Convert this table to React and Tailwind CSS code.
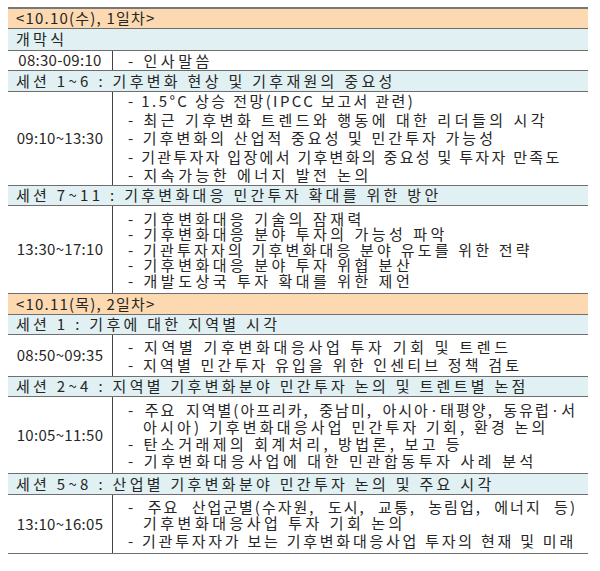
const day1 = [
  { kind: "day", text: "<10.10(수), 1일차>", h: "h-[20px]" },
  { kind: "sec", text: "개막식", h: "h-[22px]" },
  { kind: "item", time: "08:30-09:10", h: "h-[20px]", lh: "leading-[18px]", lines: [{ t: "- 인사말씀" }] },
  { kind: "sec", text: "세션 1~6 : 기후변화 현상 및 기후재원의 중요성", h: "h-[21px]" },
  {
    kind: "item",
    time: "09:10~13:30",
    h: "h-[94px]",
    lh: "leading-[18.4px]",
    lines: [
      { t: "- 1.5°C 상승 전망(IPCC 보고서 관련)", tr: "tracking-[2.4px]" },
      { t: "- 최근 기후변화 트렌드와 행동에 대한 리더들의 시각" },
      { t: "- 기후변화의 산업적 중요성 및 민간투자 가능성", tr: "tracking-[3.1px]" },
      { t: "- 기관투자자 입장에서 기후변화의 중요성 및 투자자 만족도", tr: "tracking-[2.3px]" },
      { t: "- 지속가능한 에너지 발전 논의" },
    ],
  },
  { kind: "sec", text: "세션 7~11 : 기후변화대응 민간투자 확대를 위한 방안", h: "h-[20px]" },
  {
    kind: "item",
    time: "13:30~17:10",
    h: "h-[88px]",
    lh: "leading-[15.6px]",
    lines: [
      { t: "- 기후변화대응 기술의 잠재력" },
      { t: "- 기후변화대응 분야 투자의 가능성 파악" },
      { t: "- 기관투자자의 기후변화대응 분야 유도를 위한 전략", tr: "tracking-[3.2px]" },
      { t: "- 기후변화대응 분야 투자 위협 분산" },
      { t: "- 개발도상국 투자 확대를 위한 제언" },
    ],
  },
];

const day2 = [
  { kind: "day", text: "<10.11(목), 2일차>", h: "h-[21px]" },
  { kind: "sec", text: "세션 1 : 기후에 대한 지역별 시각", h: "h-[20px]" },
  {
    kind: "item",
    time: "08:50~09:35",
    h: "h-[42px]",
    lh: "leading-[18px]",
    lines: [
      { t: "- 지역별 기후변화대응사업 투자 기회 및 트렌드", tr: "tracking-[3.7px]" },
      { t: "- 지역별 민간투자 유입을 위한 인센티브 정책 검토", tr: "tracking-[3.2px]" },
    ],
  },
  { kind: "sec", text: "세션 2~4 : 지역별 기후변화분야 민간투자 논의 및 트렌트별 논점", h: "h-[20px]" },
  {
    kind: "item",
    time: "10:05~11:50",
    h: "h-[77px]",
    lh: "leading-[17px]",
    lines: [
      { t: "- 주요 지역별(아프리카, 중남미, 아시아·태평양, 동유럽·서", tr: "tracking-[2px]", justify: true },
      { t: "아시아) 기후변화대응사업 민간투자 기회, 환경 논의", indent: true, tr: "tracking-[3.2px]" },
      { t: "- 탄소거래제의 회계처리, 방법론, 보고 등" },
      { t: "- 기후변화대응사업에 대한 민관합동투자 사례 분석", tr: "tracking-[3.6px]" },
    ],
  },
  { kind: "sec", text: "세션 5~8 : 산업별 기후변화분야 민간투자 논의 및 주요 시각", h: "h-[21px]" },
  {
    kind: "item",
    time: "13:10~16:05",
    h: "h-[59px]",
    lh: "leading-[15.5px]",
    lines: [
      { t: "- 주요 산업군별(수자원, 도시, 교통, 농림업, 에너지 등)", tr: "tracking-[2px]", justify: true },
      { t: "기후변화대응사업 투자 기회 논의", indent: true },
      { t: "- 기관투자자가 보는 기후변화대응사업 투자의 현재 및 미래", tr: "tracking-[2.75px]", gap: true },
    ],
  },
];

function Row({ row }) {
  if (row.kind === "day") {
    return (
      <div className={`${row.h} flex items-center bg-[#fdd9b1] border-b border-[#6e6e6e] px-[8px] tracking-[1.2px]`}>
        {row.text}
      </div>
    );
  }
  if (row.kind === "sec") {
    return (
      <div className={`${row.h} flex items-center bg-[#e1f0f2] border-b border-[#6e6e6e] px-[8px] tracking-[3.3px] whitespace-nowrap`}>
        {row.text}
      </div>
    );
  }
  return (
    <div className={`${row.h} flex border-b border-[#6e6e6e]`}>
      <div className="w-[105px] shrink-0 flex items-center justify-center border-r border-[#444] tracking-[0.3px]">
        {row.time}
      </div>
      <div className={`flex-1 min-w-0 flex flex-col justify-center pl-[15px] pr-[11px] ${row.lh}`}>
        {row.lines.map((l, i) => (
          <div
            key={i}
            className={`${l.tr || "tracking-[3.5px]"} ${l.indent ? "pl-[15px]" : ""} ${l.gap ? "mt-[3px]" : ""} ${
              l.justify ? "text-justify [text-align-last:justify] whitespace-nowrap" : "whitespace-nowrap"
            }`}
          >
            {l.t}
          </div>
        ))}
      </div>
    </div>
  );
}

export default function App() {
  return (
    <div className="w-[600px] h-[571px] bg-white pt-[7px] px-[8px] text-[15px] text-[#262626] font-['Noto_Sans_CJK_KR','Noto_Sans',sans-serif]">
      <div className="w-[580px] border-t-2 border-[#777]">
        {day1.concat(day2).map((r, i) => (
          <Row key={i} row={r} />
        ))}
      </div>
    </div>
  );
}
